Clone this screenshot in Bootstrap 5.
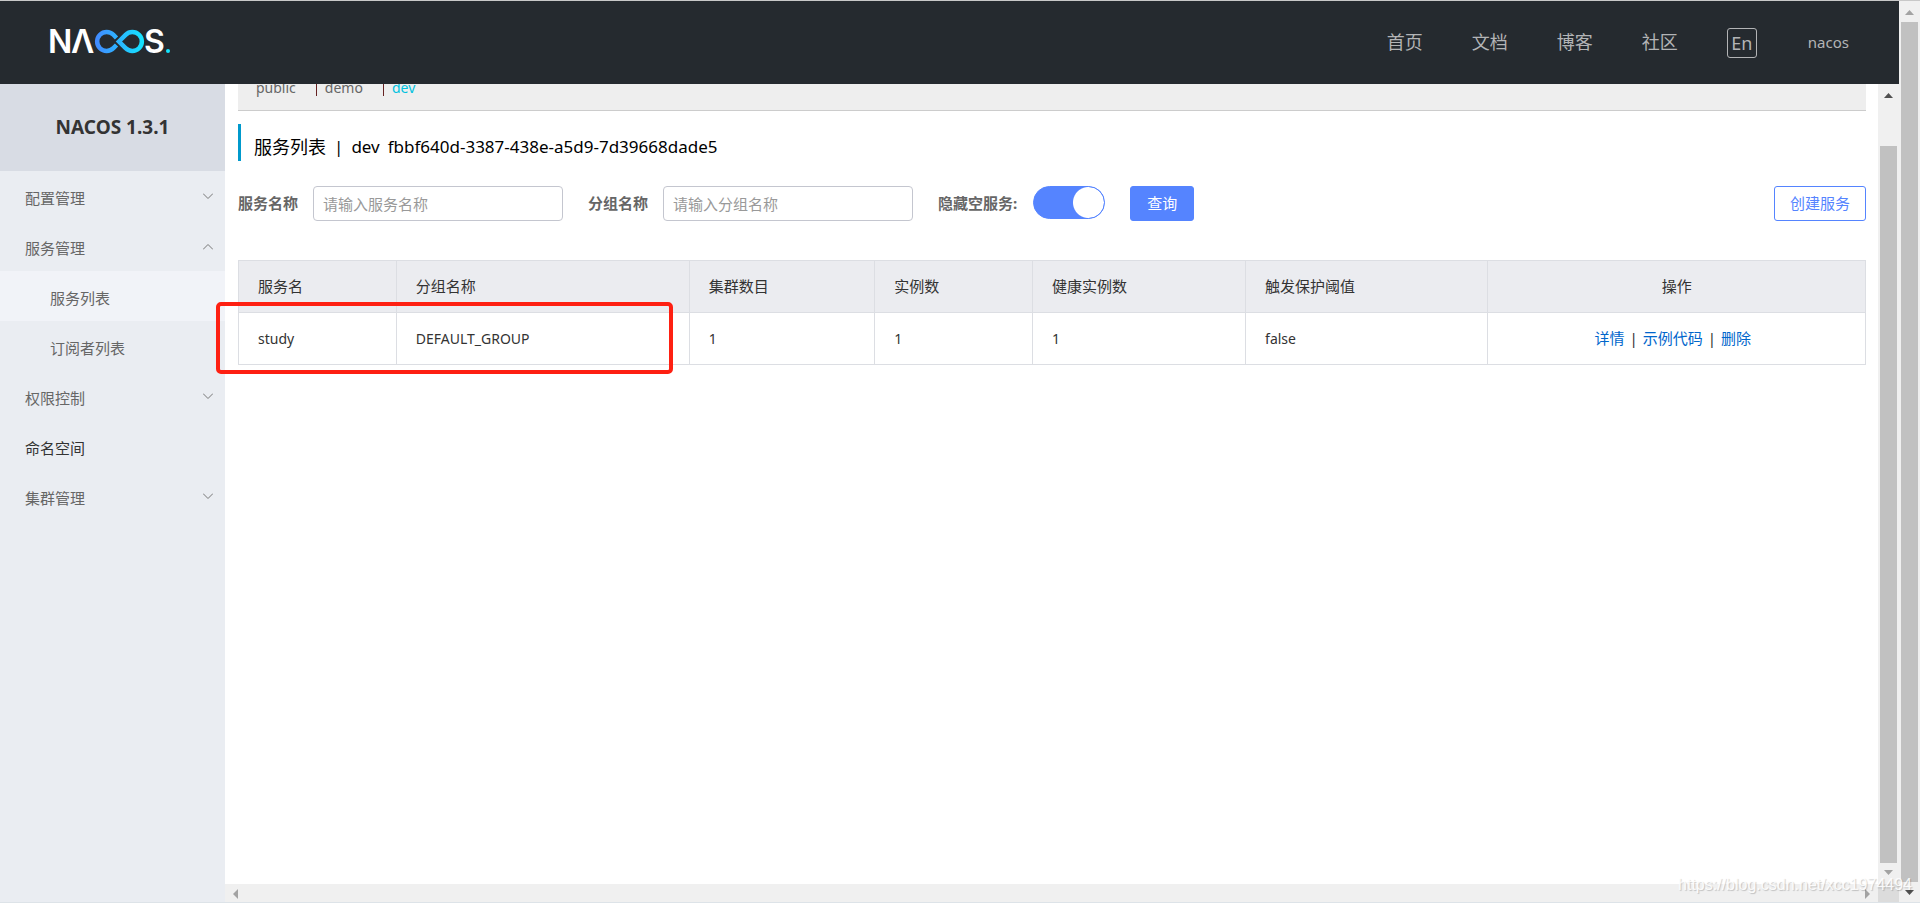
<!DOCTYPE html>
<html lang="zh-CN">
<head>
<meta charset="utf-8">
<meta name="viewport" content="width=device-width, initial-scale=1">
<title>Nacos</title>
<link href="https://cdn.jsdelivr.net/npm/bootstrap@5.3.0/dist/css/bootstrap.min.css" rel="stylesheet">
<style>
body{font-family:"Noto Sans","Noto Sans CJK SC",sans-serif;font-size:15px;color:#333;background:#fff}
a{text-decoration:none}
.shell{border-top:1px solid #c8c8c8;border-bottom:1px solid #dde3e8}
.topbar{height:83px;background:#252a2f;padding:0 50px 0 47px}
.topbar svg{display:block}
.topnav{gap:49px}
.topnav a{font-size:18px;color:#b3b4b6}
.topnav .lang{width:30px;height:30px;border:1px solid #b3b4b6;border-radius:3px;background:none;color:#b3b4b6;padding:0;font-size:18px;line-height:26px}
.topnav .user{font-size:15px;padding-left:2px}
.side{width:225px;background:#eaedf2}
.side-title{height:87px;background:#d8dce4;font-size:19px;font-weight:700;color:#333}
.side a{height:50px;padding:4px 12px 0 25px;color:#666}
.side a.sub{padding-left:50px}
.side a.current{background:#f1f3f8}
.side a.strong-item{color:#333}
.side a svg{margin-bottom:4px}
.view{padding:0 12px 0 13px}
.spaces{height:27px;background:#eee;border-bottom:1px solid #ccc;font-size:14px;line-height:7px;padding-left:18px;overflow:hidden}
.spaces a{color:#666}
.spaces a.on{color:#00c1de}
.spaces i{width:1px;height:12px;background:#622;margin-right:8px}
.heading{margin:13px 0 25px;height:37px;border-left:3px solid #09c;padding:9px 0 0 13px;font-size:17px;color:#000;gap:8px}
.heading .name{font-size:18px}
.query label{font-weight:700;color:#666;font-size:15px}
.query .form-control{width:250px;height:35px;border-color:#c4c6cf;border-radius:4px;font-size:15px;padding:0 9px;margin:0 25px 0 15px}
.query .form-control::placeholder{color:#999}
.query .btn{height:35px;font-size:15px;padding:0 15px;border-radius:3px}
.query .btn-main{background:#5584ff;border-color:#5584ff;color:#fff;padding:0 16px}
.btn-line{border-color:#5584ff;color:#5584ff;background:#fff}
.form-check-input.toggle{width:72px;height:33px;margin:0 25px 2px 16px;float:none;border:1px solid #5584ff;border-radius:33px;background:#5584ff radial-gradient(circle,#fff 15px,#5584ff 16px) no-repeat right 0 center/31px 31px}
.grid-wrap{margin-top:39px}
.svc{table-layout:fixed;margin:0;border-color:#dcdee3;--bs-table-color:#333;color:#333}
.svc th,.svc td{height:52px;padding:0 19px;vertical-align:middle;font-weight:400}
.svc th{background:#ebecf0}
.svc td{font-size:14px}
.svc td.acts{font-size:15px}
.acts div{gap:5px;padding-right:8px}
.svc td a{color:#06c}
.marker{left:-22px;top:42px;width:457px;height:72px;border:4px solid #fe2012;border-radius:5px;pointer-events:none}
.vbar{width:21px;background:#f0f0f0}
.vbar .knob{background:#c1c1c1;margin:0 2px}
.vbar svg,.hbar svg{display:block;flex:none}
.inner .knob{margin-top:41px}
.hbar{height:18px;background:#f0f0f0}
.corner{width:21px;height:18px;background:#dcdcdc}
.stamp{right:8px;bottom:7px;font:16px/20px "Liberation Sans",sans-serif;color:rgba(255,255,255,.9);text-shadow:1px 1px 1px rgba(0,0,0,.2)}
</style>
</head>
<body>
<div class="shell d-flex vh-100 overflow-hidden position-relative">
  <div class="flex-fill d-flex flex-column">
    <header class="topbar d-flex align-items-center justify-content-between">
      <a href="#" aria-label="Nacos">
        <svg width="124" height="40" viewBox="0 0 124 40" font-family="Inter" font-weight="600" font-size="32" fill="#fff">
          <defs><linearGradient id="g" gradientUnits="userSpaceOnUse" x1="48" y1="0" x2="97" y2="0"><stop offset="0" stop-color="#4388ff"/><stop offset="1" stop-color="#13e5ff"/></linearGradient></defs>
          <text x="1" y="30">N</text><text x="24" y="30">Λ</text><text x="97" y="30">S</text>
          <path d="M69.500 15L66.400 11.800A9.500 9.500 0 1 0 66.400 25.200L69.500 22M71.900 18.500L78.600 11.800A9.500 9.500 0 1 1 78.600 25.200Z" fill="none" stroke="url(#g)" stroke-width="4.500"/>
          <circle cx="121" cy="28" r="2" fill="#13e5ff"/>
        </svg>
      </a>
      <nav class="topnav d-flex align-items-center">
        <a href="#">首页</a><a href="#">文档</a><a href="#">博客</a><a href="#">社区</a>
        <button class="lang" type="button">En</button>
        <a href="#" class="user">nacos</a>
      </nav>
    </header>
    <div class="flex-fill d-flex">
      <aside class="side flex-shrink-0">
        <div class="side-title d-flex align-items-center justify-content-center">NACOS 1.3.1</div>
        <nav class="d-flex flex-column">
          <a href="#" class="d-flex align-items-center justify-content-between">配置管理<svg width="10" height="7" fill="none" stroke="#777"><path d="M0 .5L5 5.500L10 .5"/></svg></a>
          <a href="#" class="d-flex align-items-center justify-content-between">服务管理<svg width="10" height="7" fill="none" stroke="#777"><path d="M0 6.500L5 1.500L10 6.500"/></svg></a>
          <a href="#" class="sub current d-flex align-items-center">服务列表</a>
          <a href="#" class="sub d-flex align-items-center">订阅者列表</a>
          <a href="#" class="d-flex align-items-center justify-content-between">权限控制<svg width="10" height="7" fill="none" stroke="#777"><path d="M0 .5L5 5.500L10 .5"/></svg></a>
          <a href="#" class="strong-item d-flex align-items-center">命名空间</a>
          <a href="#" class="d-flex align-items-center justify-content-between">集群管理<svg width="10" height="7" fill="none" stroke="#777"><path d="M0 .5L5 5.500L10 .5"/></svg></a>
        </nav>
      </aside>
      <div class="flex-fill d-flex flex-column">
        <div class="flex-fill d-flex">
          <main class="view flex-fill">
            <div class="spaces d-flex">
              <a href="#" class="me-3">public</a><i class="ms-1"></i>
              <a href="#" class="me-3">demo</a><i class="ms-1"></i>
              <a href="#" class="on">dev</a>
            </div>
            <div class="heading d-flex align-items-center"><span class="name">服务列表</span><span>|</span><span>dev</span><span>fbbf640d-3387-438e-a5d9-7d39668dade5</span></div>
            <form class="query d-flex align-items-center">
              <label for="svcName">服务名称</label>
              <input id="svcName" class="form-control" type="text" placeholder="请输入服务名称">
              <label for="grpName">分组名称</label>
              <input id="grpName" class="form-control" type="text" placeholder="请输入分组名称">
              <label for="hideEmpty">隐藏空服务:</label>
              <input id="hideEmpty" class="form-check-input toggle" type="checkbox" role="switch" checked>
              <button type="button" class="btn btn-main">查询</button>
              <button type="button" class="btn btn-line ms-auto">创建服务</button>
            </form>
            <div class="grid-wrap position-relative">
              <table class="svc table table-bordered">
                <colgroup><col style="width:9.7%"><col style="width:18%"><col style="width:11.4%"><col style="width:9.7%"><col style="width:13.1%"><col style="width:14.9%"><col></colgroup>
                <thead><tr><th>服务名</th><th>分组名称</th><th>集群数目</th><th>实例数</th><th>健康实例数</th><th>触发保护阈值</th><th class="text-center">操作</th></tr></thead>
                <tbody><tr><td>study</td><td>DEFAULT_GROUP</td><td>1</td><td>1</td><td>1</td><td>false</td><td class="acts"><div class="d-flex justify-content-center"><a href="#">详情</a><span>|</span><a href="#">示例代码</a><span>|</span><a href="#">删除</a></div></td></tr></tbody>
              </table>
              <div class="marker position-absolute"></div>
            </div>
          </main>
          <div class="vbar inner d-flex flex-column">
            <svg width="21" height="21"><path d="M6 14L10.500 9L15 14Z" fill="#505050"/></svg>
            <div class="knob flex-fill"></div>
            <svg width="21" height="21"><path d="M6 7L10.500 12L15 7Z" fill="#a3a3a3"/></svg>
          </div>
        </div>
        <div class="d-flex">
          <div class="hbar flex-fill d-flex justify-content-between">
            <svg width="21" height="18"><path d="M13 5L8 10L13 15Z" fill="#a3a3a3"/></svg>
            <svg width="21" height="18"><path d="M8 5L13 10L8 15Z" fill="#a3a3a3"/></svg>
          </div>
          <div class="corner"></div>
        </div>
      </div>
    </div>
  </div>
  <div class="vbar d-flex flex-column">
    <svg width="21" height="21"><path d="M6 14L10.500 9L15 14Z" fill="#a3a3a3"/></svg>
    <div class="knob flex-fill"></div>
    <svg width="21" height="20"><path d="M6 8L10.500 13L15 8Z" fill="#505050"/></svg>
  </div>
  <div class="stamp position-absolute">https://blog.csdn.net/xcc1974494</div>
</div>
<script src="https://cdn.jsdelivr.net/npm/bootstrap@5.3.0/dist/js/bootstrap.bundle.min.js"></script>
</body>
</html>
